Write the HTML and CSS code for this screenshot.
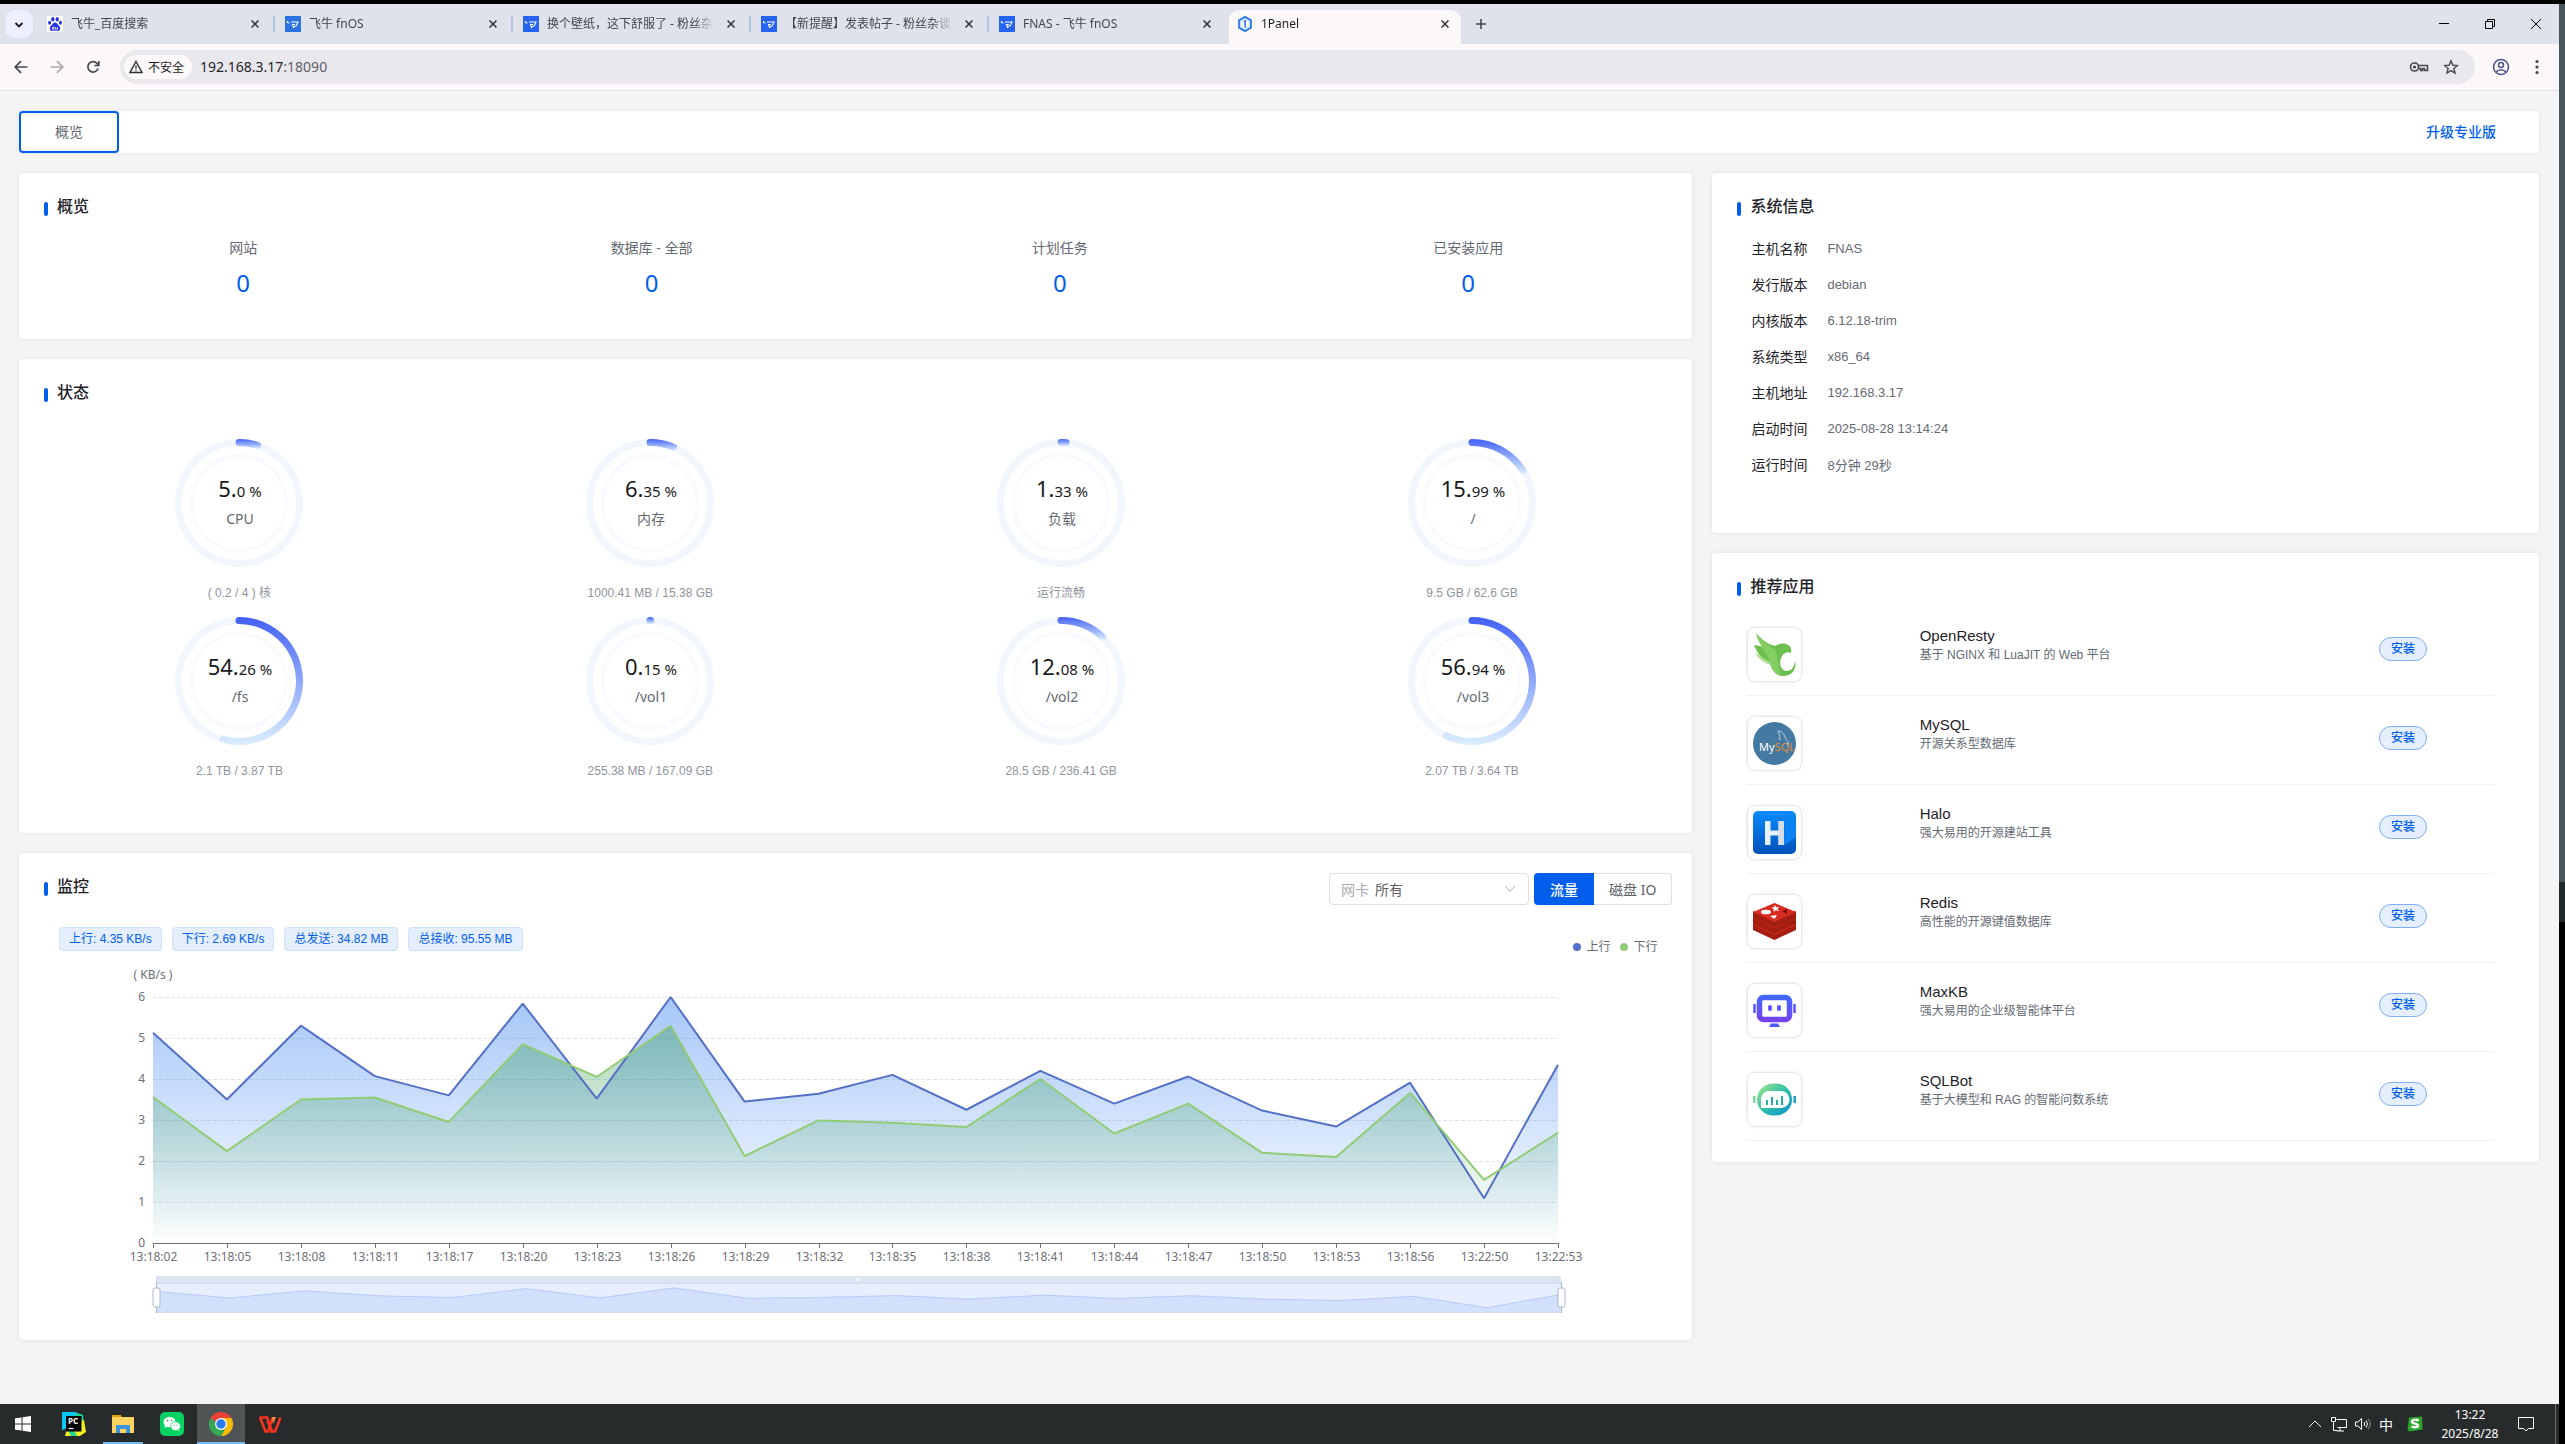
FILE: index.html
```html
<!DOCTYPE html>
<html lang="zh-CN">
<head>
  <meta charset="UTF-8" />
  <title>1Panel</title>
  <link rel="stylesheet" href="styles.css">
</head>
<body>

<div class="screen">
  <div class="desktop">

    <!-- Browser tabs -->
    <header class="tab-strip">
      <button class="tab-search" aria-label="搜索标签页">
        <svg width="10" height="10" viewBox="0 0 10 10"><path d="M1.5 3L5 6.5 8.5 3" fill="none" stroke="#1b1b1f" stroke-width="1.8"/></svg>
      </button>
      <div class="tab">
        <svg class="favicon" viewBox="0 0 16 16"><rect width="16" height="16" rx="2" fill="#fff"/><g fill="#2932e1"><ellipse cx="5.8" cy="3.2" rx="1.6" ry="2.2"/><ellipse cx="10.2" cy="3.2" rx="1.6" ry="2.2"/><ellipse cx="2.6" cy="6.8" rx="1.5" ry="2"/><ellipse cx="13.4" cy="6.8" rx="1.5" ry="2"/><path d="M8 6.5c-2 0-2.500 2-4 3.300-2 1.800-1.500 5.200 1 5.200 1.200 0 2-.4 3-.4s1.800.4 3 .4c2.500 0 3-3.400 1-5.200C10.500 8.500 10 6.500 8 6.500z"/></g><path d="M6.800 10.500v2.800H5.300v-1.600h1.500M8.600 11v2.200h2V11" fill="none" stroke="#fff" stroke-width=".8"/></svg>
        <span class="tab-title">飞牛_百度搜索</span>
        <button class="tab-close" aria-label="关闭"><svg viewBox="0 0 8 8"><path d="M.5.5l7 7M7.5.5l-7 7"/></svg></button>
      </div>
      <div class="tab">
        <svg class="favicon" viewBox="0 0 16 16"><rect width="16" height="16" fill="#2b73e0"/><path d="M2.500 5v1.500l2 .5M6 6h7l-1.500 3.500L8.500 11.500 7.500 8.500H10" fill="none" stroke="#fff" stroke-width="1.100"/></svg>
        <span class="tab-title">飞牛 fnOS</span>
        <button class="tab-close" aria-label="关闭"><svg viewBox="0 0 8 8"><path d="M.5.5l7 7M7.5.5l-7 7"/></svg></button>
      </div>
      <div class="tab">
        <svg class="favicon" viewBox="0 0 16 16"><rect width="16" height="16" fill="#2563f0"/><path d="M2.500 5v1.500l2 .5M6 6h7l-1.500 3.500L8.500 11.500 7.500 8.500H10" fill="none" stroke="#fff" stroke-width="1.100"/></svg>
        <span class="tab-title">换个壁纸，这下舒服了 - 粉丝杂</span>
        <button class="tab-close" aria-label="关闭"><svg viewBox="0 0 8 8"><path d="M.5.5l7 7M7.5.5l-7 7"/></svg></button>
      </div>
      <div class="tab">
        <svg class="favicon" viewBox="0 0 16 16"><rect width="16" height="16" fill="#2563f0"/><path d="M2.500 5v1.500l2 .5M6 6h7l-1.500 3.500L8.500 11.500 7.500 8.500H10" fill="none" stroke="#fff" stroke-width="1.100"/></svg>
        <span class="tab-title">【新提醒】发表帖子 - 粉丝杂谈</span>
        <button class="tab-close" aria-label="关闭"><svg viewBox="0 0 8 8"><path d="M.5.5l7 7M7.5.5l-7 7"/></svg></button>
      </div>
      <div class="tab">
        <svg class="favicon" viewBox="0 0 16 16"><rect width="16" height="16" fill="#2563f0"/><path d="M2.500 5v1.500l2 .5M6 6h7l-1.500 3.500L8.500 11.500 7.500 8.500H10" fill="none" stroke="#fff" stroke-width="1.100"/></svg>
        <span class="tab-title">FNAS - 飞牛 fnOS</span>
        <button class="tab-close" aria-label="关闭"><svg viewBox="0 0 8 8"><path d="M.5.5l7 7M7.5.5l-7 7"/></svg></button>
      </div>
      <div class="tab active">
        <svg class="favicon" viewBox="0 0 16 16"><path d="M8 .8l6 3.500v7.400l-6 3.500-6-3.500V4.300z" fill="#cfe0ff" stroke="#1a6bea" stroke-width="1.600"/><path d="M8 4l3.400 2v4L8 12l-3.400-2V6z" fill="#fff"/><path d="M6.800 6L8.200 5v6.400" fill="none" stroke="#1a6bea" stroke-width="1.400"/></svg>
        <span class="tab-title">1Panel</span>
        <button class="tab-close" aria-label="关闭"><svg viewBox="0 0 8 8"><path d="M.5.5l7 7M7.5.5l-7 7"/></svg></button>
      </div>
      <button class="new-tab" aria-label="新标签页"><svg width="12" height="12" viewBox="0 0 12 12"><path d="M6 1v10M1 6h10" stroke="#45464f" stroke-width="1.6"/></svg></button>
      <div class="win-controls">
        <button aria-label="最小化"><svg width="12" height="12" viewBox="0 0 12 12"><path d="M1 5.5h10"/></svg></button>
        <button aria-label="还原"><svg width="12" height="12" viewBox="0 0 12 12"><path d="M1.5 3.5h7v7h-7zM3.5 3.5v-2h7v7h-2"/></svg></button>
        <button aria-label="关闭"><svg width="12" height="12" viewBox="0 0 12 12"><path d="M1 1l10 10M11 1L1 11"/></svg></button>
      </div>
    </header>

    <!-- Address bar -->
    <div class="toolbar">
      <button class="nav-btn" aria-label="后退"><svg width="16" height="16" viewBox="0 0 16 16"><path d="M14.5 8h-12M8 2.200L2.200 8 8 13.800" fill="none" stroke="#45464f" stroke-width="1.7"/></svg></button>
      <button class="nav-btn" aria-label="前进"><svg width="16" height="16" viewBox="0 0 16 16"><path d="M1.5 8h12M8 2.200L13.800 8 8 13.800" fill="none" stroke="#aaa7ad" stroke-width="1.7"/></svg></button>
      <button class="nav-btn" aria-label="刷新"><svg width="16" height="16" viewBox="0 0 16 16"><path d="M13 9.500A5.200 5.200 0 1 1 12.300 4.800L13.500 6" fill="none" stroke="#45464f" stroke-width="1.7"/><path d="M13.800 2v4.500H9.300" fill="none" stroke="#45464f" stroke-width="1.7"/></svg></button>
      <div class="omnibox">
        <button class="chip">
          <svg width="14" height="14" viewBox="0 0 14 14"><path d="M7 1.500L13 12.500H1z" fill="none" stroke="#303036" stroke-width="1.4"/><path d="M7 5.500v3.500M7 10v1.300" stroke="#303036" stroke-width="1.3"/></svg>
          不安全
        </button>
        <div class="url">192.168.3.17<span>:18090</span></div>
        <svg width="20" height="14" viewBox="0 0 20 14"><g fill="none" stroke="#45464f" stroke-width="1.6"><circle cx="5.5" cy="7" r="4"/><path d="M9.500 5.500h9v5h-3V8.500h-2v2h-2v-2h-2"/></g><circle cx="5.5" cy="7" r="1.6" fill="#45464f"/></svg>
        <svg class="star" width="16" height="16" viewBox="0 0 16 16"><path d="M8 1.800l1.800 4.300 4.600.4-3.500 3 1.100 4.500L8 11.600 4 14l1.100-4.500-3.500-3 4.600-.4z" fill="none" stroke="#45464f" stroke-width="1.4"/></svg>
      </div>
      <button class="nav-btn profile" aria-label="个人资料"><svg width="18" height="18" viewBox="0 0 18 18"><g fill="none" stroke="#4a5486" stroke-width="1.5"><circle cx="9" cy="9" r="7.5"/><circle cx="9" cy="7" r="2.5"/><path d="M4 14c2.500-3 7.500-3 10 0"/></g></svg></button>
      <button class="nav-btn" aria-label="菜单"><svg width="16" height="16" viewBox="0 0 16 16" fill="#45464f"><circle cx="8" cy="2.5" r="1.6"/><circle cx="8" cy="8" r="1.6"/><circle cx="8" cy="13.5" r="1.6"/></svg></button>
    </div>

    <!-- Dashboard -->
    <main class="page">
      <nav class="card topbar">
        <button class="route-btn">概览</button>
        <a class="upgrade" href="#">升级专业版</a>
      </nav>

      <div class="columns">
        <div class="col-left">
          <section class="card">
            <h2 class="card-title">概览</h2>
            <div class="stats">
              <div class="stat"><span>网站</span><a href="#">0</a></div>
              <div class="stat"><span>数据库 - 全部</span><a href="#">0</a></div>
              <div class="stat"><span>计划任务</span><a href="#">0</a></div>
              <div class="stat"><span>已安装应用</span><a href="#">0</a></div>
            </div>
          </section>

          <section class="card">
            <h2 class="card-title">状态</h2>
            <div class="gauges" id="gauges"></div>
          </section>

          <section class="card">
            <div class="monitor-head">
              <h2 class="card-title">监控</h2>
              <div class="controls">
                <div class="select-box">
                  <label for="nic">网卡</label>
                  <select id="nic"><option>所有</option></select>
                  <svg width="14" height="14" viewBox="0 0 14 14"><path d="M2.500 4.500L7 9.500l4.500-5" fill="none" stroke="#a8abb2"/></svg>
                </div>
                <div class="switch">
                  <button class="on">流量</button><button>磁盘 IO</button>
                </div>
              </div>
            </div>
            <div class="monitor-info">
              <div class="tags">
                <span class="tag">上行: 4.35 KB/s</span>
                <span class="tag">下行: 2.69 KB/s</span>
                <span class="tag">总发送: 34.82 MB</span>
                <span class="tag">总接收: 95.55 MB</span>
              </div>
              <div class="legend">
                <span class="up">上行</span>
                <span class="down">下行</span>
              </div>
            </div>
            <svg class="chart" id="chart"></svg>
          </section>
        </div>

        <div class="col-right">
          <section class="card">
            <h2 class="card-title">系统信息</h2>
            <table class="sysinfo">
              <tr><th>主机名称</th><td>FNAS</td></tr>
              <tr><th>发行版本</th><td>debian</td></tr>
              <tr><th>内核版本</th><td>6.12.18-trim</td></tr>
              <tr><th>系统类型</th><td>x86_64</td></tr>
              <tr><th>主机地址</th><td>192.168.3.17</td></tr>
              <tr><th>启动时间</th><td>2025-08-28 13:14:24</td></tr>
              <tr><th>运行时间</th><td>8分钟 29秒</td></tr>
            </table>
          </section>

          <section class="card">
            <h2 class="card-title">推荐应用</h2>
            <div class="apps">
              <div class="app">
                <div class="app-icon">
                  <svg viewBox="0 0 43 43"><path d="M2 20l12 4 5 8C12 31 6 27 2 20z" fill="#b5e09a"/><path d="M3 0c5 6 11 11 19 13 3-2 7-3 11-2 4 1 6 4 5 9-4-2-8 0-10 5-2 7 0 12 5 13 5 0 8-3 9-10 2 8-3 15-12 15-8 0-12-7-13-14C12 27 5 23 1 12l10 2C8 10 5 6 3 0z" fill="#6cc04f"/><path d="M3 0c5 9 13 12 19 17 3 5 2 15 6 25-8-2-11-8-11-14C12 18 5 10 3 0z" fill="#85cf62"/></svg>
                </div>
                <div class="app-text"><h3>OpenResty</h3><p>基于 NGINX 和 LuaJIT 的 Web 平台</p></div>
                <div><button class="install">安装</button></div>
              </div>
              <div class="app">
                <div class="app-icon">
                  <svg viewBox="0 0 43 43"><circle cx="21.5" cy="21.5" r="21.5" fill="#4479a1"/><text x="6" y="29" font-size="11" fill="#fff">My<tspan fill="#e48e2c">SQL</tspan></text><path d="M25 9c4 0 6 3 7 6 1 3 2 4 4 6l-2 .5 1 2M25 9l2 5-1 3 2 1" fill="none" stroke="#cfdfea" stroke-width=".8"/></svg>
                </div>
                <div class="app-text"><h3>MySQL</h3><p>开源关系型数据库</p></div>
                <div><button class="install">安装</button></div>
              </div>
              <div class="app">
                <div class="app-icon">
                  <svg viewBox="0 0 43 43"><defs><linearGradient id="halo" x1="0" y1="0" x2="0" y2="1"><stop offset="0" stop-color="#0a8cff"/><stop offset="1" stop-color="#0050b8"/></linearGradient></defs><rect width="43" height="43" rx="5" fill="url(#halo)"/><path d="M31 34l12-8v-14l-11-3z" fill="#0a84f5"/><path d="M12 10h5.500v9.500h8V10H31v24h-5.500V24.500h-8V34H12z" fill="#e9f1fb"/><path d="M25.500 10H31v24h-5.500z" fill="#d3dbe6"/></svg>
                </div>
                <div class="app-text"><h3>Halo</h3><p>强大易用的开源建站工具</p></div>
                <div><button class="install">安装</button></div>
              </div>
              <div class="app">
                <div class="app-icon">
                  <svg viewBox="0 0 43 43"><path d="M0 22v8l21.500 10L43 30v-8L21.500 32z" fill="#a41e11"/><path d="M0 22l21.500-9L43 22v3L21.500 35 0 25z" fill="#d82c20"/><path d="M0 17v7l21.500 10L43 24v-7L21.500 27z" fill="#a41e11"/><path d="M0 16l21.500-9L43 16v2L21.500 28.500 0 18z" fill="#d82c20"/><path d="M0 11v7l21.500 10L43 18v-7L21.500 21z" fill="#a41e11"/><path d="M0 12L21.500 3 43 12 21.500 22z" fill="#d82c20"/><ellipse cx="13" cy="12" rx="5" ry="2.3" fill="#fff"/><path d="M22 5l1.300 2.200 3-.3-1.800 2 1.500 2.200-3-.8-2.500 1.500.3-2.600-2.300-1.400 2.800-.5zM17 16l7-1-2.500 4z" fill="#fff"/><path d="M29 11l5-2v5z" fill="#7a0c00"/></svg>
                </div>
                <div class="app-text"><h3>Redis</h3><p>高性能的开源键值数据库</p></div>
                <div><button class="install">安装</button></div>
              </div>
              <div class="app">
                <div class="app-icon">
                  <svg viewBox="0 0 43 43"><defs><linearGradient id="maxkb" gradientUnits="userSpaceOnUse" x1="0" y1="6" x2="0" y2="34"><stop offset="0" stop-color="#3f6bff"/><stop offset="1" stop-color="#7a3ff2"/></linearGradient></defs><rect x="6.5" y="8.5" width="30" height="22" rx="4" fill="none" stroke="url(#maxkb)" stroke-width="5.5"/><path d="M10 30v-2h7l-5 4z" fill="#7a3ff2"/><path d="M1.500 15v9M41.500 15v9" stroke="url(#maxkb)" stroke-width="2.5"/><rect x="15" y="16" width="4" height="6" rx="2" fill="#5a55fa"/><rect x="24" y="16" width="4" height="6" rx="2" fill="#5a55fa"/><path d="M18 34.500h7l2 3.500H16z" fill="#4a5cfa"/></svg>
                </div>
                <div class="app-text"><h3>MaxKB</h3><p>强大易用的企业级智能体平台</p></div>
                <div><button class="install">安装</button></div>
              </div>
              <div class="app">
                <div class="app-icon">
                  <svg viewBox="0 0 43 43"><defs><linearGradient id="sqlbot" x1="0" y1="0" x2="1" y2="1"><stop offset="0" stop-color="#a5e88a"/><stop offset=".5" stop-color="#32bfa8"/><stop offset="1" stop-color="#0a8fd6"/></linearGradient></defs><rect x="4" y="5.5" width="35" height="32" rx="16" fill="url(#sqlbot)"/><path d="M15 13h13a8 8 0 0 1 0 17H8v-9a8 8 0 0 1 7-8z" fill="#fff"/><path d="M14 22v5M19 19v8M24 22v5M29 18v9" stroke="#25b0a8" stroke-width="2"/><path d="M1.300 18v7" stroke="#7cd8a0" stroke-width="2.5"/><path d="M41.700 18v7" stroke="#1a9fc4" stroke-width="2.5"/></svg>
                </div>
                <div class="app-text"><h3>SQLBot</h3><p>基于大模型和 RAG 的智能问数系统</p></div>
                <div><button class="install">安装</button></div>
              </div>
            </div>
          </section>
        </div>
      </div>
    </main>

    <!-- Windows taskbar -->
    <footer class="taskbar">
      <button class="task start" aria-label="开始"><svg width="16" height="16" viewBox="0 0 16 16" fill="#fff"><path d="M0 2.300L6.500 1.400v6.100H0zM7.500 1.200L16 0v7.500H7.500zM0 8.500h6.500v6.100L0 13.700zM7.500 8.500H16V16l-8.500-1.200z"/></svg></button>
      <button class="task" aria-label="PyCharm"><svg width="24" height="24" viewBox="0 0 24 24"><path d="M0 0h13l8 3-6 10L0 18z" fill="#0cc6f5"/><path d="M13 1l8 2 1 8-7 4z" fill="#21d789"/><path d="M22 8l2 12-6 4H3l2-8z" fill="#f2ef22"/><path d="M5 16l4 8h6l-5-10z" fill="#21d789"/><rect x="4" y="4" width="15.5" height="15.5" fill="#000"/><text x="6" y="12" font-size="8" font-weight="bold" fill="#fff">PC</text><path d="M6.500 16.500h5" stroke="#fff" stroke-width="1.2"/></svg></button>
      <button class="task open" aria-label="文件资源管理器"><svg width="24" height="24" viewBox="0 0 24 24"><path d="M1 3h9l1 3H1z" fill="#e0a10e"/><path d="M1 5h22v16H1z" fill="#ffd35f"/><path d="M5 21v-8h14v8h-4v-4H9v4z" fill="#3c94dd"/></svg></button>
      <button class="task" aria-label="微信"><svg width="24" height="24" viewBox="0 0 24 24"><rect width="24" height="24" rx="5" fill="#07d160"/><g fill="#fff"><ellipse cx="9.5" cy="10" rx="6" ry="5.2"/><path d="M5 13l-.5 3 3-1.500zM18 16l1.800 3-3-1z"/></g><ellipse cx="15.5" cy="14.2" rx="5" ry="4.4" fill="#fff" stroke="#07d160" stroke-width=".7"/><g fill="#07b050"><circle cx="7.5" cy="8.6" r=".8"/><circle cx="11.5" cy="8.6" r=".8"/><circle cx="14" cy="13" r=".6"/><circle cx="17" cy="13" r=".6"/></g></svg></button>
      <button class="task current" aria-label="Chrome"><svg width="24" height="24" viewBox="0 0 24 24"><path d="M12 12L1.600 6A12 12 0 0 1 22.400 6z" fill="#ea4335"/><path d="M12 12V6h10.400A12 12 0 0 1 12 24l5-9z" fill="#fbbc05"/><path d="M1.600 6A12 12 0 0 0 12 24l5.200-9L12 12 6.800 15z" fill="#34a853"/><path d="M12 6H1.600l3.400 5.500L12 12z" fill="#ea4335"/><path d="M1.600 6l5.200 9 3-3z" fill="#34a853"/><circle cx="12" cy="12" r="6" fill="#fff"/><circle cx="12" cy="12" r="4.7" fill="#2b7cf0"/></svg></button>
      <button class="task" aria-label="WPS"><svg width="24" height="24" viewBox="0 0 24 24"><path d="M1.500 5.500H9L14 19M22.500 5.500L17 19.500h-3.500L9.500 9M2 5.500L7.500 19.500H10L14.500 6" fill="none" stroke="#f5331e" stroke-width="2.6"/><path d="M14 5h4l-3 7z" fill="#ff8a3c"/></svg></button>

      <div class="tray">
        <svg viewBox="0 0 16 16"><path d="M2 11l6-6 6 6"/></svg>
        <svg viewBox="0 0 16 16"><path d="M5.500 3.500h10v8h-9M9 12v3M6 15h7M.5 1.500h4v4h-4zM2.500 5.500v9h4"/></svg>
        <svg viewBox="0 0 16 16"><path d="M.5 6v4h2.500l3.500 3.500v-11L3 6zM9 6q1.500 2 0 4M11 4.500q3 3.500 0 7"/><path d="M13 3q4.500 5 0 10" opacity=".5"/></svg>
        <span class="ime">中</span>
        <svg class="sogou" viewBox="0 0 16 16"><path d="M2 1.500L15 .5l.5 13L2 15.500 .5 14z" fill="#2ba52b" stroke="none"/><path d="M11.800 4.500C9 3.300 5 3.500 5 5.800c0 2.400 6 1.300 6 3.700 0 2-4 2.200-6.500 1" stroke="#fff" stroke-width="2.4"/></svg>
        <div class="clock"><span>13:22</span><span>2025/8/28</span></div>
        <svg class="notice" viewBox="0 0 16 16"><path d="M.5 1.500h15v11h-5L8 15l-2.500-2.500h-5z"/></svg>
        <span class="show-desktop"></span>
      </div>
    </footer>
  </div>

  <div class="side-strip"><span></span><span></span></div>
</div>

<script src="script.js"></script>
</body>
</html>
```

FILE: styles.css
```css
* {
  box-sizing: border-box;
}

body {
  margin: 0;
  background: #000;
  font-family: "Noto Sans", "Noto Sans CJK SC", sans-serif;
  font-size: 14px;
  color: #1f2329;
}

button,
select {
  font: inherit;
  border: none;
  background: none;
  padding: 0;
}

a {
  color: #005eeb;
  text-decoration: none;
}

.screen {
  display: flex;
  min-height: 100vh;
  padding-top: 4px;
}

.desktop {
  flex: 1;
  display: flex;
  flex-direction: column;
  background: #f4f4f4;
}

.side-strip {
  width: 6px;
  display: flex;
  flex-direction: column;
}

.side-strip span:first-child {
  height: 61%;
  background: #47565b;
}

.side-strip span:last-child {
  height: 40px;
  background: #22292b;
}

/* browser tabs */
.tab-strip {
  display: flex;
  align-items: flex-end;
  height: 40px;
  padding-left: 5px;
  background: #dfe2eb;
}

.tab-search {
  width: 28px;
  height: 28px;
  margin: 0 6px 6px 0;
  border-radius: 10px;
  background: #ebeffe;
}

.tab {
  position: relative;
  display: flex;
  align-items: center;
  width: 232px;
  height: 34px;
  margin-right: 6px;
  padding: 0 8px 6px;
  border-radius: 10px 10px 0 0;
  font-size: 12px;
  color: #45464f;
}

.tab::after {
  content: "";
  position: absolute;
  right: -4px;
  top: 6px;
  width: 2px;
  height: 16px;
  background: #b3c5e3;
}

.tab:has(+ .active)::after,
.tab.active::after {
  display: none;
}

.tab.active {
  background: #fcf8fa;
  color: #1b1b1f;
}

.favicon {
  width: 16px;
  height: 16px;
  margin-right: 8px;
}

.tab-title {
  flex: 1;
  overflow: hidden;
  white-space: nowrap;
  line-height: 20px;
  mask-image: linear-gradient(to right, #000 88%, transparent);
}

.tab-close {
  width: 16px;
  height: 16px;
  margin-left: 8px;
}

.tab-close svg {
  display: block;
  width: 8px;
  height: 8px;
  margin: 4px;
  fill: none;
  stroke: #303036;
  stroke-width: 1.5;
}

.new-tab {
  width: 28px;
  height: 28px;
  margin-bottom: 6px;
}

.win-controls {
  display: flex;
  align-self: flex-start;
  margin-left: auto;
}

.win-controls button {
  width: 46px;
  height: 40px;
}

.win-controls svg {
  fill: none;
  stroke: #000;
}

/* address bar */
.toolbar {
  display: flex;
  align-items: center;
  height: 47px;
  padding: 0 8px 1px 7px;
  background: #fcf8fa;
  border-bottom: 1px solid #e1dfe1;
}

.nav-btn {
  display: flex;
  align-items: center;
  justify-content: center;
  width: 28px;
  height: 28px;
  margin-right: 8px;
}

.nav-btn:last-child {
  margin-right: 0;
}

.omnibox {
  flex: 1;
  display: flex;
  align-items: center;
  height: 34px;
  margin-left: 5px;
  padding: 0 16px 0 4px;
  border-radius: 17px;
  background: #e9e8ed;
}

.chip {
  display: flex;
  align-items: center;
  gap: 5px;
  height: 24px;
  padding: 0 8px 0 5px;
  border-radius: 12px;
  background: #fcf8fa;
  font-size: 12px;
  color: #1b1b1f;
}

.url {
  flex: 1;
  padding-left: 8px;
}

.url span {
  color: #5f6068;
}

.star {
  margin-left: 14px;
}

.profile {
  margin-left: 12px;
}

/* dashboard */
.page {
  flex: 1;
  padding: 20px 20px 20px 19px;
}

.card {
  padding: 20px;
  background: #fff;
  border-radius: 4px;
  box-shadow: 0 0 4px rgba(0, 60, 150, 0.1);
}

.topbar {
  display: flex;
  align-items: center;
  justify-content: space-between;
  height: 42px;
  margin-bottom: 20px;
  padding: 0 43px 0 0;
}

.route-btn {
  width: 100px;
  height: 42px;
  padding-bottom: 2px;
  border: 2px solid #005eeb;
  border-radius: 4px;
  color: #646a73;
}

.upgrade {
  padding-bottom: 3px;
  font-weight: 500;
}

.columns {
  display: flex;
  align-items: flex-start;
  gap: 20px;
}

.col-left,
.col-right {
  display: flex;
  flex-direction: column;
  gap: 20px;
}

.col-left {
  flex: 1;
}

.col-right {
  width: calc(33% - 5px);
}

.card-title {
  display: flex;
  align-items: flex-end;
  gap: 9px;
  margin: 0;
  padding-left: 5px;
  font-size: 16px;
  font-weight: 500;
  line-height: 26px;
}

.card-title::before {
  content: "";
  width: 4px;
  height: 14px;
  margin-bottom: 3px;
  border-radius: 2px;
  background: #005eeb;
}

.stats {
  display: grid;
  grid-template-columns: repeat(4, 1fr);
  padding: 18px 0 21px;
  text-align: center;
}

.stat {
  display: flex;
  flex-direction: column;
  gap: 9px;
  line-height: 22px;
  color: #646a73;
}

.stat a {
  font-size: 24px;
  line-height: 30px;
}

.gauges {
  display: grid;
  grid-template-columns: repeat(4, 1fr);
  row-gap: 15px;
  margin: 34px -5px 33px;
}

.gauge {
  display: flex;
  flex-direction: column;
  align-items: center;
  gap: 17px;
  font-family: "Liberation Sans", "Noto Sans CJK SC", sans-serif;
  font-size: 12px;
  line-height: 18px;
  color: #8f959e;
}

.gauge svg {
  display: block;
  font-family: "Noto Sans", "Noto Sans CJK SC", sans-serif;
}

.gauge-value {
  font-size: 15px;
  fill: #1a1a1a;
}

.gauge-int {
  font-size: 22px;
}

.gauge-name {
  font-size: 14px;
  fill: #646a73;
}

/* monitor */
.monitor-head,
.monitor-info,
.controls {
  display: flex;
  align-items: flex-start;
  justify-content: space-between;
}

.controls {
  gap: 5px;
}

.select-box {
  position: relative;
  display: flex;
  align-items: center;
  width: 200px;
  height: 32px;
  border: 1px solid #dcdfe6;
  border-radius: 4px;
}

.select-box label {
  padding: 0 6px 0 11px;
  color: #a8abb2;
}

.select-box select {
  flex: 1;
  appearance: none;
  color: #606266;
}

.select-box svg {
  position: absolute;
  right: 11px;
}

.switch {
  display: flex;
}

.switch button {
  height: 32px;
  padding: 0 15px;
  border: 1px solid #dcdfe6;
  border-left: none;
  border-radius: 0 4px 4px 0;
  color: #606266;
}

.switch .on {
  padding: 0 16px;
  border: none;
  border-radius: 4px 0 0 4px;
  background: #005eeb;
  color: #fff;
  font-weight: 500;
}

.monitor-info {
  margin-top: 22px;
  padding: 0 15px 0 20px;
}

.tags {
  display: flex;
  gap: 10px;
  font-family: "Liberation Sans", "Noto Sans CJK SC", sans-serif;
}

.tag {
  height: 24px;
  padding: 0 9px;
  border: 1px solid #ccdffb;
  border-radius: 4px;
  background: #e5eefd;
  font-size: 12px;
  line-height: 22px;
  color: #005eeb;
}

.legend {
  display: flex;
  gap: 10px;
  margin-top: 8px;
  font-size: 12px;
  line-height: 24px;
  color: #646a73;
}

.legend span::before {
  content: "";
  display: inline-block;
  width: 8px;
  height: 8px;
  margin-right: 5px;
  border-radius: 50%;
}

.legend .up::before {
  background: #5470c6;
}

.legend .down::before {
  background: #91cc75;
}

.chart {
  display: block;
  width: 100%;
  height: 361px;
  font-size: 12px;
  fill: #6e7079;
}

/* right column */
.sysinfo {
  margin: 11px 0 31px 19px;
  border-spacing: 0;
}

.sysinfo th,
.sysinfo td {
  height: 36px;
  padding: 0;
  text-align: left;
  font-weight: 400;
}

.sysinfo th {
  width: 76px;
}

.sysinfo td {
  font-family: "Liberation Sans", "Noto Sans CJK SC", sans-serif;
  font-size: 13px;
  color: #646a73;
}

.apps {
  margin: 8px 25px 1px 15px;
}

.app {
  display: grid;
  grid-template-columns: 3fr 8fr 2fr;
  padding: 20px 0 13px;
  border-bottom: 1px solid #efefef;
}

.app-icon {
  width: 55px;
  height: 55px;
  padding: 5px;
  border: 1px solid #e8e8e8;
  border-radius: 8px;
  box-shadow: 0 0 3px rgba(0, 0, 0, 0.1);
}

.app-icon svg {
  display: block;
  width: 43px;
  height: 43px;
}

.app-text {
  font-family: "Liberation Sans", "Noto Sans CJK SC", sans-serif;
  line-height: 18px;
}

.app-text h3 {
  margin: 0;
  font-size: 15px;
  font-weight: 400;
}

.app-text p {
  margin: 1px 0 0;
  font-size: 12px;
  color: #646a73;
}

.install {
  width: 48px;
  height: 24px;
  margin-top: 10px;
  border: 1px solid #7faef5;
  border-radius: 12px;
  background: #e5eefd;
  font-size: 12px;
  font-weight: 500;
  line-height: 20px;
  color: #005eeb;
}

/* taskbar */
.taskbar {
  display: flex;
  height: 40px;
  background: #272b2c;
  color: #fff;
}

.task {
  display: flex;
  align-items: center;
  justify-content: center;
  width: 48px;
  height: 40px;
  margin-right: 1px;
}

.task.start {
  width: 46px;
  margin-right: 4px;
}

.task.open {
  background: linear-gradient(#76b9ed, #76b9ed) center bottom / 40px 2px no-repeat;
}

.task.current {
  background: #505455;
  border-bottom: 2px solid #76b9ed;
  padding-top: 2px;
}

.tray {
  display: flex;
  align-items: center;
  gap: 8px;
  margin-left: auto;
}

.tray svg {
  width: 16px;
  height: 16px;
  fill: none;
  stroke: #fff;
}

.ime {
  width: 16px;
  font-size: 14px;
}

.tray .sogou {
  margin-left: 4px;
}

.clock {
  display: flex;
  flex-direction: column;
  width: 74px;
  margin-left: 2px;
  font-size: 12px;
  line-height: 19px;
  text-align: center;
}

.tray .notice {
  margin: 0 13px 0 3px;
}

.show-desktop {
  width: 4px;
  height: 40px;
  border-left: 1px solid #6b6e6f;
}
```

FILE: script.js
```js
const gauges = [
  { value: '5.0', name: 'CPU', note: '( 0.2 / 4 ) 核' },
  { value: '6.35', name: '内存', note: '1000.41 MB / 15.38 GB' },
  { value: '1.33', name: '负载', note: '运行流畅' },
  { value: '15.99', name: '/', note: '9.5 GB / 62.6 GB' },
  { value: '54.26', name: '/fs', note: '2.1 TB / 3.87 TB' },
  { value: '0.15', name: '/vol1', note: '255.38 MB / 167.09 GB' },
  { value: '12.08', name: '/vol2', note: '28.5 GB / 236.41 GB' },
  { value: '56.94', name: '/vol3', note: '2.07 TB / 3.64 TB' }
];

const times = ['13:18:02', '13:18:05', '13:18:08', '13:18:11', '13:18:17', '13:18:20', '13:18:23',
  '13:18:26', '13:18:29', '13:18:32', '13:18:35', '13:18:38', '13:18:41', '13:18:44', '13:18:47',
  '13:18:50', '13:18:53', '13:18:56', '13:22:50', '13:22:53'];
const up = [5.13, 3.5, 5.3, 4.07, 3.6, 5.84, 3.52, 6, 3.45, 3.64, 4.1, 3.25, 4.2, 3.4, 4.06, 3.23, 2.84, 3.91, 1.09, 4.35];
const down = [3.56, 2.24, 3.5, 3.55, 2.95, 4.85, 4.05, 5.3, 2.12, 2.99, 2.93, 2.83, 4, 2.67, 3.4, 2.2, 2.1, 3.66, 1.54, 2.69];

function drawGauges() {
  const r = 60.5;
  document.getElementById('gauges').innerHTML = gauges.map((g, i) => {
    const angle = Number(g.value) / 100 * 2 * Math.PI;
    const x = 64 + r * Math.sin(angle);
    const y = 64 - r * Math.cos(angle);
    const large = angle > Math.PI ? 1 : 0;
    const bottom = (large ? 64 + r : y) + 3.5;
    const [int, dec] = g.value.split('.');
    return `<div class="gauge">
      <svg width="128" height="128">
        <defs>
          <linearGradient id="arc${i}" gradientUnits="userSpaceOnUse" x1="0" y1="0" x2="0" y2="${bottom}">
            <stop offset="0" stop-color="#4261f6"/><stop offset="1" stop-color="#dceffe"/>
          </linearGradient>
          <radialGradient id="ring${i}"><stop offset=".9" stop-color="#fff"/><stop offset="1" stop-color="#f4f8ff"/></radialGradient>
        </defs>
        <circle cx="64" cy="64" r="${r}" fill="none" stroke="#f2f7fe" stroke-width="7"/>
        <circle cx="64" cy="64" r="49" fill="url(#ring${i})"/>
        <path d="M64 3.5A${r} ${r} 0 ${large} 1 ${x} ${y}" fill="none" stroke="url(#arc${i})" stroke-width="7" stroke-linecap="round"/>
        <text class="gauge-value" x="65" y="58" text-anchor="middle"><tspan class="gauge-int">${int}.</tspan>${dec} %</text>
        <text class="gauge-name" x="65" y="85" text-anchor="middle">${g.name}</text>
      </svg>
      <span>${g.note}</span>
    </div>`;
  }).join('');
}

function drawChart() {
  const svg = document.getElementById('chart');
  const width = svg.getBoundingClientRect().width;
  const left = Math.round(width * 0.07);
  const right = Math.round(width * 0.93);
  const base = 284;
  const unit = 41;
  const step = (right - left) / (times.length - 1);

  const line = (data, x0, y0, k) => data.map((v, i) => `${x0 + i * step},${y0 - v * k}`).join(' ');
  const area = (data, x0, y0, k) => `${x0},${y0} ${line(data, x0, y0, k)} ${x0 + right - left},${y0}`;
  const gradient = (id, color) => `<linearGradient id="${id}" x1="0" y1="0" x2="0" y2="1">
    <stop offset="0" stop-color="${color}" stop-opacity=".35"/><stop offset="1" stop-color="${color}" stop-opacity="0"/></linearGradient>`;

  let out = `<defs>${gradient('upFill', '#005eeb')}${gradient('downFill', '#1b8f3c')}</defs>`;
  out += `<text x="${left}" y="20" text-anchor="middle">( KB/s )</text>`;
  for (let v = 0; v <= 6; v++) {
    const y = base - v * unit;
    out += `<text x="${left - 8}" y="${y + 4}" text-anchor="end">${v}</text>`;
    if (v) out += `<path d="M${left} ${y + 0.5}H${right}" stroke="#e0e4ef" stroke-dasharray="4 2"/>`;
  }
  times.forEach((t, i) => {
    const x = Math.round(left + i * step) + 0.5;
    out += `<path d="M${x} ${base}v5" stroke="#6e7079"/><text x="${x}" y="302" text-anchor="middle">${t}</text>`;
  });

  out += `<polygon points="${area(up, left, base, unit)}" fill="url(#upFill)"/>
    <polygon points="${area(down, left, base, unit)}" fill="url(#downFill)"/>
    <polyline points="${line(up, left, base, unit)}" fill="none" stroke="#5470c6" stroke-width="2" stroke-linejoin="bevel"/>
    <polyline points="${line(down, left, base, unit)}" fill="none" stroke="#91cc75" stroke-width="2" stroke-linejoin="bevel"/>
    <path d="M${left} ${base}H${right}" stroke="#6e7079" shape-rendering="crispEdges"/>`;

  // zoom slider under the axis
  const sl = left + 3;
  const sw = right - left;
  const mid = sl + sw / 2;
  out += `<rect x="${sl}" y="317" width="${sw}" height="7" fill="#dde3f1"/>
    <rect x="${sl}" y="324" width="${sw}" height="30" fill="#e7eefe"/>
    <polygon points="${area(up, sl, 353, 4)}" fill="#d3e0fc"/>
    <polyline points="${line(up, sl, 353, 4)}" fill="none" stroke="#b6cbfa"/>
    <path d="M${sl} 324.500h${sw}M${sl} 353.500h${sw}" stroke="#d2dbee"/>
    <path d="M${mid - 2} 319v3M${mid} 319v3M${mid + 2} 319v3" stroke="#fff"/>`;
  [sl, sl + sw].forEach(x => {
    out += `<path d="M${x + 0.5} 323v31" stroke="#acb8d1"/>
      <rect x="${x - 3}" y="329" width="7" height="19" rx="2" fill="#fff" stroke="#acb8d1"/>`;
  });
  svg.innerHTML = out;
}

drawGauges();
drawChart();
window.addEventListener('resize', drawChart);
```
